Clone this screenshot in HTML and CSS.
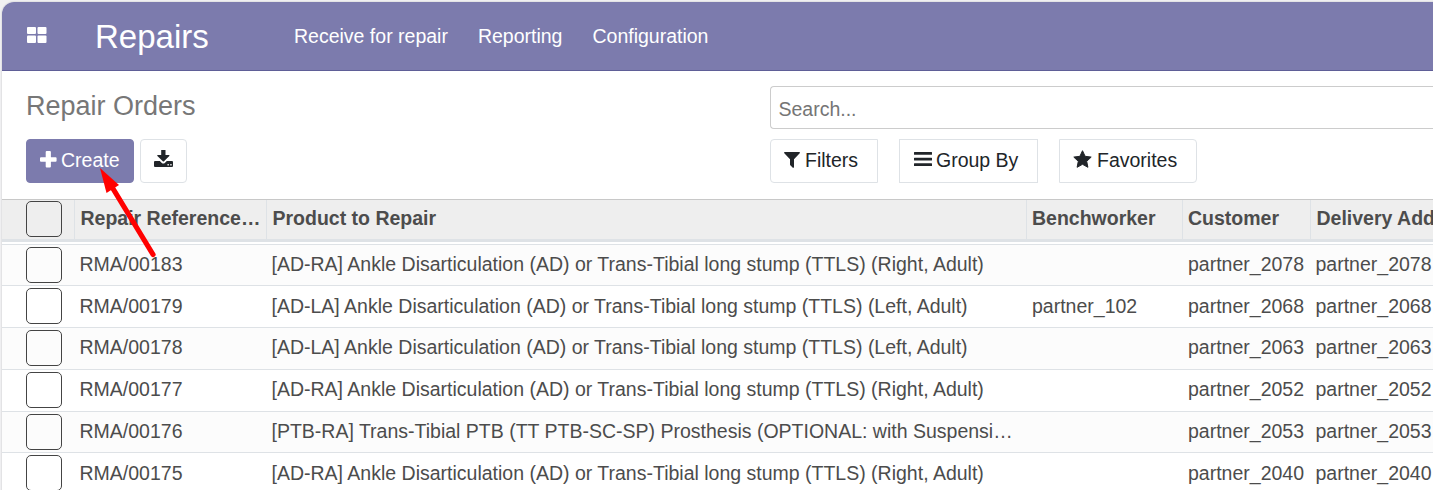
FILE: index.html
```html
<!DOCTYPE html>
<html lang="en">
<head>
<meta charset="utf-8">
<title>Repair Orders</title>
<link rel="stylesheet" href="styles.css">
</head>
<body>
<div class="window">
  <nav class="navbar">
    <svg class="apps" viewBox="0 0 20 16"><g fill="#fff"><rect width="9" height="7" rx="1"/><rect x="10.5" width="9" height="7" rx="1"/><rect y="8.5" width="9" height="7.5" rx="1"/><rect x="10.5" y="8.5" width="9" height="7.5" rx="1"/></g></svg>
    <span class="brand">Repairs</span>
    <div class="menu"><span>Receive for repair</span><span>Reporting</span><span>Configuration</span></div>
  </nav>
  <section class="control">
    <div class="left">
      <h1>Repair Orders</h1>
      <div class="buttons">
        <button class="btn primary"><svg class="plus" width="17" height="17" viewBox="0 0 17 17"><path fill="#fff" d="M6.7 0h3.2q1 0 1 1v5.2H15.600q1 0 1 1v2.600q0 1-1 1H10.900v4.700q0 1-1 1H6.700q-1 0-1-1v-4.700H1q-1 0-1-1V7.200q0-1 1-1h4.700V1q0-1 1-1z"/></svg>Create</button>
        <button class="btn export"><svg width="19" height="17" viewBox="0 0 19 17"><path fill="#212529" d="M7.200 0h4.300v5h3.600q.8.300.2 1L10 11.300q-.6.500-1.200 0L3.400 6q-.6-.7.200-1h3.600z"/><path fill="#212529" fill-rule="evenodd" d="M1 11h4.800l2 1.900q1.500 1.200 3 0l2-1.900H18q1 0 1 1v4q0 1-1 1H1q-1 0-1-1v-4q0-1 1-1zm12.500 3v1.400h1.300V14zm2.800 0v1.400h1.300V14z"/></svg></button>
      </div>
    </div>
    <div class="right">
      <div class="search">Search...</div>
      <div class="filters">
        <button class="btn filter"><svg width="16" height="16" viewBox="0 0 16 16"><path fill="#212529" d="M.7 0h14.600q1 .4.4 1.300L10 7.200v8q-.3 1-1.200.5L6.300 13.200Q6 12.900 6 12.500V7.200L.3 1.300Q-.3.400.7 0z"/></svg>Filters</button>
        <button class="btn group"><svg width="18" height="16" viewBox="0 0 18 16"><path fill="#212529" d="M.5 1h17q.5 0 .5.5v1.700q0 .5-.5.500H.5q-.5 0-.5-.5V1.500Q0 1 .5 1zm0 5.700h17q.5 0 .5.5v1.700q0 .5-.5.500H.5q-.5 0-.5-.5V7.200q0-.5.500-.5zm0 5.600h17q.5 0 .5.500v1.700q0 .5-.5.500H.5q-.5 0-.5-.5v-1.700q0-.5.5-.5z"/></svg>Group By</button>
        <button class="btn favorite"><svg width="19" height="18" viewBox="0 0 19 18"><path fill="#212529" stroke="#212529" stroke-linejoin="round" d="M9.500.7l2.600 5.600 6.100.8-4.500 4.200 1.200 6-5.400-3-5.400 3 1.200-6L.8 7.100l6.100-.8z"/></svg>Favorites</button>
      </div>
    </div>
  </section>
  <main class="list">
    <div class="row head"><span class="check"><i></i></span><span>Repair Reference…</span><span>Product to Repair</span><span>Benchworker</span><span>Customer</span><span>Delivery Add</span></div>
    <div class="row"><span class="check"><i></i></span><span>RMA/00183</span><span>[AD-RA] Ankle Disarticulation (AD) or Trans-Tibial long stump (TTLS) (Right, Adult)</span><span></span><span>partner_2078</span><span>partner_2078</span></div>
    <div class="row low"><span class="check"><i></i></span><span>RMA/00179</span><span>[AD-LA] Ankle Disarticulation (AD) or Trans-Tibial long stump (TTLS) (Left, Adult)</span><span>partner_102</span><span>partner_2068</span><span>partner_2068</span></div>
    <div class="row"><span class="check"><i></i></span><span>RMA/00178</span><span>[AD-LA] Ankle Disarticulation (AD) or Trans-Tibial long stump (TTLS) (Left, Adult)</span><span></span><span>partner_2063</span><span>partner_2063</span></div>
    <div class="row"><span class="check"><i></i></span><span>RMA/00177</span><span>[AD-RA] Ankle Disarticulation (AD) or Trans-Tibial long stump (TTLS) (Right, Adult)</span><span></span><span>partner_2052</span><span>partner_2052</span></div>
    <div class="row"><span class="check"><i></i></span><span>RMA/00176</span><span>[PTB-RA] Trans-Tibial PTB (TT PTB-SC-SP) Prosthesis (OPTIONAL: with Suspensi…</span><span></span><span>partner_2053</span><span>partner_2053</span></div>
    <div class="row low"><span class="check"><i></i></span><span>RMA/00175</span><span>[AD-RA] Ankle Disarticulation (AD) or Trans-Tibial long stump (TTLS) (Right, Adult)</span><span></span><span>partner_2040</span><span>partner_2040</span></div>
  </main>
</div>
<svg class="arrow" width="60" height="92" viewBox="0 0 60 92"><path d="M13 19L54 86.500" stroke="#f00" stroke-width="5.200" stroke-linecap="round"/><path d="M1 0L20 17 7.500 25z" fill="#f00"/></svg>
</body>
</html>
```
FILE: styles.css
```css
* { box-sizing: border-box; }
body {
  margin: 0;
  height: 490px;
  overflow: hidden;
  position: relative;
  background: #f1f1f2;
  font: 19.5px/24px "Liberation Sans", Arial, sans-serif;
  color: #4c4c4c;
}
.window {
  margin: 2px 0 0 2px;
  height: 488px;
  overflow: hidden;
  background: #fff;
  border-radius: 12px 0 0 0;
  box-shadow: 0 0 1px 1px #e2e2e4;
}
.navbar {
  display: flex;
  height: 69px;
  background: #7c7bad;
  border-bottom: 1px solid #5f5e97;
  color: #fff;
  padding-left: 25px;
}
.apps { width: 20px; height: 16px; margin-top: 25px; }
.brand { font-size: 33px; line-height: 40px; margin: 15px 0 0 48px; width: 199px; }
.menu { display: flex; gap: 30px; padding-top: 22px; white-space: nowrap; }
.control { display: flex; height: 128px; }
.left { width: 768px; padding: 18px 0 0 24px; }
h1 { margin: 0; font-size: 27px; line-height: 34px; font-weight: 400; color: #777; }
.buttons { display: flex; gap: 6px; margin-top: 16px; }
.btn {
  display: flex;
  align-items: flex-start;
  height: 44px;
  padding: 8px 0 0 13px;
  border: 1px solid #dee2e6;
  border-radius: 4px;
  background: #fff;
  color: #212529;
  font: inherit;
  white-space: nowrap;
}
.btn svg { flex: none; }
.primary { width: 108px; background: #7c7bad; border-color: #7c7bad; color: #fff; }
.plus { margin: 3px 4px 0 0; }
.export { width: 47px; padding-top: 10px; }
.right { flex: 1; padding-top: 15px; }
.search {
  height: 43px;
  border: 1px solid #ccc;
  border-right: 0;
  border-radius: 4px 0 0 4px;
  padding: 10px 7.5px;
  color: #757575;
}
.filters { display: flex; gap: 21px; margin-top: 10px; }
.filter { width: 108px; border-radius: 4px 0 0 4px; }
.filter svg { margin: 4px 5px 0 0; }
.group { width: 139px; border-radius: 0; }
.group svg { margin: 3px 4px 0 1px; }
.favorite { width: 138px; border-radius: 0 4px 4px 0; }
.favorite svg { margin: 2px 5px 0 0; }
.list { display: grid; grid-template-rows: 46px 41px 42px 42px 42px 41px 42px; }
.row {
  display: grid;
  grid-template-columns: 72px 192px 760px 156px 128px 180px;
  border-bottom: 1px solid #dee2e6;
  white-space: nowrap;
}
.row > span { padding: 7px 0 0 6px; }
.row > span:nth-child(2) { padding-left: 5.5px; }
.row > span:nth-child(3) { padding-left: 5.5px; }
.row > span:nth-child(6) { padding-left: 5.5px; }
.row.low > span { padding-top: 8px; }
.row:nth-child(even) { background: #fcfcfc; }
.row > .check, .row.low > .check { padding: 2px 0 0 24px; }
.check i { display: block; width: 36px; height: 36px; border: 1px solid #444; border-radius: 5px; }
.head { border-top: 1px solid #c8c8c8; font-weight: 700; }
.head > span { height: 42px; background: #eee; border-bottom: 3px solid #dee2e6; padding-top: 6px; }
.head > span + span { border-left: 1px solid #dee2e6; }
.head > span:nth-child(4), .head > span:nth-child(5) { padding-left: 5px; }
.head > .check { padding-top: 1px; }
.arrow { position: absolute; left: 99px; top: 168px; fill: none; }
```
